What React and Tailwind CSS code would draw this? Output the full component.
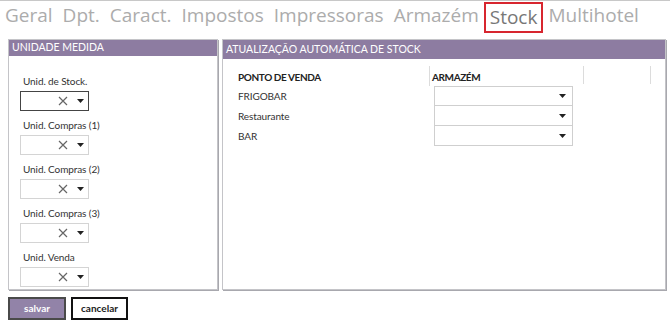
import React from 'react';

const font = { fontFamily: '"Open Sans", "Noto Sans", sans-serif' };
const small = { fontFamily: 'Lato, "Open Sans", sans-serif' };

const tabs = ['Geral', 'Dpt.', 'Caract.', 'Impostos', 'Impressoras', 'Armazém', 'Stock', 'Multihotel'];
const unidades = ['Unid. de Stock.', 'Unid. Compras (1)', 'Unid. Compras (2)', 'Unid. Compras (3)', 'Unid. Venda'];
const pontos = ['FRIGOBAR', 'Restaurante', 'BAR'];

function Arrow() {
  return (
    <svg width="7" height="4" viewBox="0 0 7 4">
      <path d="M0 0 L7 0 L3.5 4 Z" fill="#222" />
    </svg>
  );
}

function Cross() {
  return (
    <svg width="10" height="10" viewBox="0 0 10 10">
      <path d="M1 1 L9 9 M9 1 L1 9" stroke="#666" strokeWidth="1.2" />
    </svg>
  );
}

function Combo({ focused }) {
  return (
    <div
      className={
        'ml-[11px] mt-[2px] flex h-[20px] w-[69px] items-center justify-end gap-[9px] bg-white pr-[4px] ' +
        (focused ? 'border border-[#444]' : 'border border-[#d4d4d4]')
      }
    >
      <Cross />
      <Arrow />
    </div>
  );
}

function Panel({ title, className, children }) {
  return (
    <div className={'flex flex-col border border-[#c4c4c8] shadow-[1px_1px_0_#a8a8ae] ' + className}>
      <div className="flex h-[19px] items-center bg-[#8d7ca1] pl-[3px] text-[10.5px] text-white">{title}</div>
      {children}
    </div>
  );
}

export default function App() {
  return (
    <div className="h-[323px] w-[670px] overflow-hidden bg-white" style={font}>
      {/* abas */}
      <div className="flex h-[39px] items-start gap-[10px] border-t border-[#c8c8c8] pl-[5px] pt-[1px] text-[19px] leading-[27px] text-[#acacac]">
        {tabs.map((t) =>
          t === 'Stock' ? (
            <span key={t} className="-mx-[5px] border-2 border-[#d7262f] px-[4px] text-[#777]">
              {t}
            </span>
          ) : (
            <span key={t}>{t}</span>
          )
        )}
      </div>

      <div className="flex gap-[4px] pl-[8px]" style={small}>
        <Panel title="UNIDADE MEDIDA" className="h-[251px] w-[210px]">
          <div className="pt-[17px]">
            {unidades.map((u, i) => (
              <div key={u} className="mb-[6px]">
                <div className="h-[16px] pl-[14px] text-[10px] leading-[16px] tracking-[-0.1px] text-[#333]">{u}</div>
                <Combo focused={i === 0} />
              </div>
            ))}
          </div>
        </Panel>

        <Panel title="ATUALIZAÇÃO AUTOMÁTICA DE STOCK" className="h-[251px] w-[444px]">
          <div className="grid grid-cols-[191px_154px_68px] pl-[15px] pt-[7px] text-[#222]">
            <div className="flex h-[20px] items-center pt-[3px] text-[10px] font-bold tracking-[-0.4px]">
              PONTO DE VENDA
            </div>
            <div className="flex h-[20px] items-center border-l border-[#dcdcdc] pl-[2px] pt-[3px] text-[10px] font-bold tracking-[-0.4px]">
              ARMAZÉM
            </div>
            <div className="h-[18px] border-x border-[#dcdcdc]" />
            {pontos.map((p, i) => (
              <React.Fragment key={p}>
                <div className="flex h-[20px] items-center text-[10px] tracking-[-0.1px] text-[#333]">{p}</div>
                <div className="flex h-[20px] items-start pl-[5px]">
                  <div
                    className={
                      'flex h-[20px] w-[139px] items-center justify-end border border-[#cfcfcf] pr-[6px] ' +
                      (i > 0 ? 'border-t-0' : '')
                    }
                  >
                    <Arrow />
                  </div>
                </div>
                <div />
              </React.Fragment>
            ))}
          </div>
        </Panel>
      </div>

      {/* botões */}
      <div className="flex gap-[5px] pl-[8px] pt-[7px]" style={small}>
        <button className="h-[23px] w-[58px] border-2 border-[#4a4a4a] bg-[#9283a8] text-[10px] font-bold text-white">
          salvar
        </button>
        <button className="h-[23px] w-[57px] border-2 border-[#111] bg-white text-[10px] font-bold text-[#222]">
          cancelar
        </button>
      </div>
    </div>
  );
}
